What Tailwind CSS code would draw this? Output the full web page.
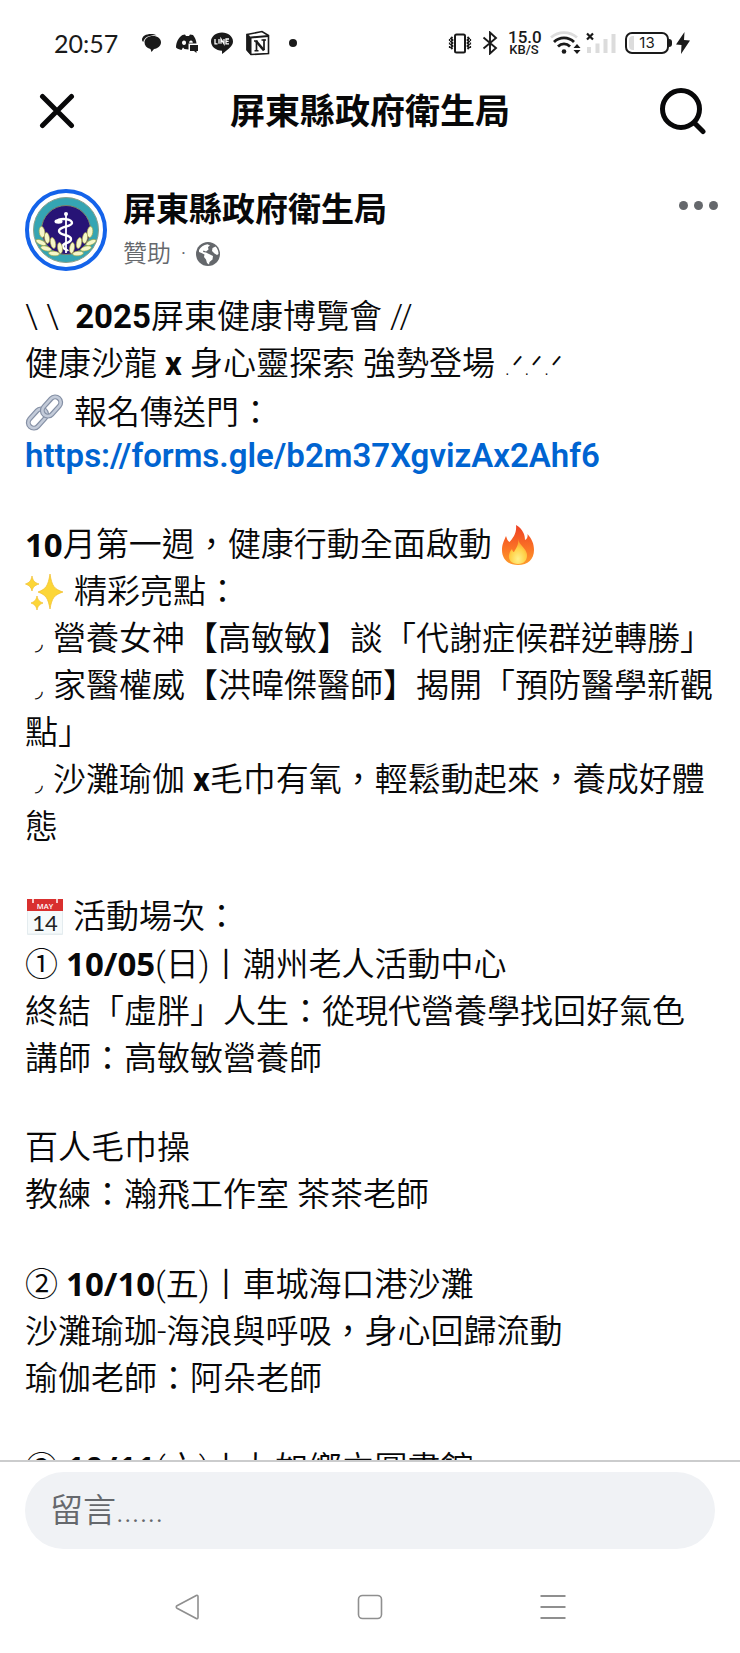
<!DOCTYPE html>
<html lang="zh-Hant">
<head>
  <meta charset="UTF-8" />
  <meta name="viewport" content="width=device-width, initial-scale=1.0"/>
  <title>屏東縣政府衛生局</title>
  <script src="https://cdn.jsdelivr.net/npm/@tailwindcss/browser@4"></script>
</head>
<body class="h-screen flex flex-col overflow-hidden bg-white text-[#080809] font-['Roboto','Noto_Sans_CJK_TC',sans-serif]">

  <!-- Status bar -->
  <div class="shrink-0 h-[86px] pl-[54px] pr-[50px] flex items-center justify-between text-[#1a1a1a]">
    <div class="flex items-center">
      <span class="w-[87px] text-[25px] leading-8 font-['Lato',sans-serif]">20:57</span>
      <div class="flex items-center gap-3">
        <svg class="w-[22px] h-6" viewBox="0 0 22 24" fill="currentColor">
          <path d="M1 9C1 5 5 3 10 3c2 0 4 .4 5.500 1.200C8 4 3.500 6 2.200 11 1.400 10.400 1 9.800 1 9z"/>
          <path d="M12 5c4.500 0 8 2.600 8 6.300 0 3.600-3 6.200-7 6.700L10.500 21 9.500 18C5.500 17 3.500 14.500 3.500 11.300 3.500 7.600 7.300 5 12 5z"/>
        </svg>
        <svg class="w-6 h-6" viewBox="0 0 24 24" fill="currentColor">
          <path fill-rule="evenodd" d="M7.500 4 10 3.500l1 1.500h3l1-1.500L18 4c2 2.600 3.300 5.500 3.500 8.500h-8v6l-4-.5-1.500-1.500L6.500 19C4 18.600 2.500 17.800 1 16.500 1 11.500 3.500 6.500 7.500 4zM9 9.500c-1.200 0-2 1-2 2.200s.8 2.300 2 2.300 2-1 2-2.300S10.200 9.500 9 9.500zM16 9.500c-1.200 0-1.900 1-1.900 2.200h3.700c0-1.200-.7-2.200-1.800-2.200z"/>
          <path d="M15 14h8v6h-1.500v2L19 20h-4z"/>
        </svg>
        <svg class="w-[22px] h-6" viewBox="0 0 22 24">
          <path d="M11 1.500c6 0 11 3.900 11 8.900 0 4.600-5 8-11 12.600v-3.300C5 19.500 0 15.500 0 10.400 0 5.400 5 1.500 11 1.500z" fill="currentColor"/>
          <path d="M4 8v4.800h2.500M8 8v4.800M10 12.800V8l3 4.800V8M18 8h-3v4.800h3M15 10.400h2.600" fill="none" stroke="#fff" stroke-width="1.300"/>
        </svg>
        <svg class="w-[26px] h-[26px]" viewBox="0 0 26 26" fill="none" stroke="currentColor">
          <path d="M2 4.500 17 1.500 23.500 5.500V23.500L6 24.500 2 20z" fill="#fff" stroke-width="1.600"/>
          <path d="M2 4 6 7.500V24.500L2 20z" fill="currentColor"/>
          <path d="M6 7.500 23.500 6" stroke-width="2"/>
          <path d="M11.500 11v9.500M19 9.500V20" stroke-width="1.700"/>
          <path d="M11 11 19 20.500" stroke-width="2.600"/>
          <path d="M9 11h3.500M9.500 20.800h4M16.500 10H21" stroke-width="1.400"/>
        </svg>
        <span class="ml-1.5 w-2 h-2 rounded-full bg-[#1a1a1a]"></span>
      </div>
    </div>

    <div class="flex items-center">
      <svg class="w-6 h-6" viewBox="0 0 24 24" fill="none" stroke="currentColor">
        <rect x="7" y="3.500" width="10" height="18" rx="1.500" stroke-width="2"/>
        <path d="M4.500 6 3 7.500 4.500 9 3 10.500 4.500 12 3 13.500 4.500 15 3 16.500 4.500 18M19.500 6 21 7.500 19.500 9 21 10.500 19.500 12 21 13.500 19.500 15 21 16.500 19.500 18" stroke-width="1.800"/>
        <path d="M1.500 8v9M22.500 8v9" stroke-width="1.200" stroke-dasharray="2 1.500"/>
      </svg>
      <svg class="ml-2.5 w-4 h-6" viewBox="0 0 16 24" fill="none" stroke="currentColor" stroke-width="1.900">
        <path d="M1.500 6.500 14 17 8 22.500V1.500L14 7 1.500 17.500"/>
      </svg>
      <div class="ml-2.5 w-8 text-center font-['Roboto',sans-serif] font-medium">
        <div class="text-[17px] leading-[14px]">15.0</div>
        <div class="text-[13px] leading-[12px]">KB/S</div>
      </div>
      <svg class="ml-2.5 w-[31px] h-6" viewBox="0 0 31 24" fill="none" stroke="currentColor" stroke-width="2.800">
        <path d="M1 6.500C8.500 0 19.500 0 27 6.500" stroke="#dcdcdc"/>
        <path d="M4 11C9.500 5.500 18.500 5.500 24 11M8 15.500c3.500-3.500 8.500-3.500 12 0"/>
        <circle cx="14" cy="20.500" r="2.300" fill="currentColor" stroke="none"/>
        <path d="M23.500 17 27 13l3.500 4zM23.500 19 27 23l3.500-4z" fill="currentColor" stroke="none"/>
      </svg>
      <svg class="ml-1 w-8 h-6" viewBox="0 0 32 24" fill="none">
        <path d="M2 2.500 8 8.500M8 2.500 2 8.500" stroke="currentColor" stroke-width="2.200"/>
        <path d="M4 16v6M12.500 12.500V22M20.500 8v14M28.500 3v19" stroke="#dcdcdc" stroke-width="4"/>
      </svg>
      <div class="ml-2 relative w-11 h-[22px] rounded-[7px] border-2 border-[#1a1a1a] flex items-center justify-center text-[15px] leading-4 font-['Inter',sans-serif]">
        <span class="absolute left-0.5 top-0.5 w-[5px] h-3.5 rounded-l bg-[#dcdcdc]"></span>
        13
      </div>
      <span class="w-[3px] h-2 rounded-r bg-[#1a1a1a]"></span>
      <svg class="ml-1 w-[14px] h-6" viewBox="0 0 14 24" fill="currentColor">
        <path d="M8.500 1 0 13.500l5.500.5L5 23 14 9.500 8 9z"/>
      </svg>
    </div>
  </div>

  <!-- Header -->
  <header class="shrink-0 h-[50px] px-[33px] flex items-center justify-between">
    <button type="button" aria-label="關閉" class="w-12 h-12 flex items-center justify-center">
      <svg class="w-9 h-9" viewBox="0 0 36 36" fill="none" stroke="currentColor" stroke-width="5" stroke-linecap="round">
        <path d="M3.500 3.500 32.500 32.500M32.500 3.500 3.500 32.500"/>
      </svg>
    </button>
    <h1 class="pt-1 text-[35px] leading-[50px] font-bold">屏東縣政府衛生局</h1>
    <button type="button" aria-label="搜尋" class="w-12 h-12 flex items-center justify-center">
      <svg class="w-12 h-12" viewBox="0 0 48 48" fill="none" stroke="currentColor" stroke-width="5" stroke-linecap="round">
        <circle cx="22" cy="22" r="18.500"/>
        <path d="M35.500 36 44 44.500"/>
      </svg>
    </button>
  </header>

  <!-- Post -->
  <main class="flex-1 min-h-0 overflow-hidden px-[25px] pt-[53px]">
    <div class="flex items-start">
      <svg class="w-[82px] h-[82px] shrink-0" viewBox="0 0 82 82">
        <circle cx="41" cy="41" r="39" fill="#fff" stroke="#1463ea" stroke-width="4"/>
        <circle cx="41" cy="41" r="32.500" fill="#35a5b3" stroke="#8a9f8c" stroke-width="1"/>
        <circle cx="41" cy="41" r="24.500" fill="#271376" stroke="#7d8468" stroke-width="1"/>
        <path d="M41 26v38" stroke="#fff" stroke-width="1.800"/>
        <circle cx="41" cy="25" r="2" fill="#fff"/>
        <path d="M31 33c4-5 16-3 16 1s-13 3-13 8 12 3 12 8-8 3-8 7 4 3 5 5" fill="none" stroke="#fff" stroke-width="2.400"/>
        <ellipse cx="33.500" cy="32.500" rx="4" ry="2.200" fill="#fff"/>
        <g fill="#f6f7c9" stroke="#a5a33c" stroke-width=".6">
          <ellipse cx="17" cy="43" rx="2.800" ry="5.500" transform="rotate(-8 17 43)"/>
          <ellipse cx="22" cy="49" rx="2.500" ry="5.500" transform="rotate(-8 22 49)"/>
          <ellipse cx="28" cy="54" rx="2.500" ry="5.500" transform="rotate(-12 28 54)"/>
          <ellipse cx="35" cy="59" rx="2.400" ry="5.500" transform="rotate(-8 35 59)"/>
          <ellipse cx="16" cy="53.500" rx="5.500" ry="2.300" transform="rotate(25 16 53.500)"/>
          <ellipse cx="21" cy="59.500" rx="5.500" ry="2.300" transform="rotate(15 21 59.500)"/>
          <ellipse cx="29" cy="64.500" rx="5.500" ry="2.300" transform="rotate(5 29 64.500)"/>
          <ellipse cx="65" cy="43" rx="2.800" ry="5.500" transform="rotate(8 65 43)"/>
          <ellipse cx="60" cy="49" rx="2.500" ry="5.500" transform="rotate(8 60 49)"/>
          <ellipse cx="54" cy="54" rx="2.500" ry="5.500" transform="rotate(12 54 54)"/>
          <ellipse cx="47" cy="59" rx="2.400" ry="5.500" transform="rotate(8 47 59)"/>
          <ellipse cx="66" cy="53.500" rx="5.500" ry="2.300" transform="rotate(-25 66 53.500)"/>
          <ellipse cx="61" cy="59.500" rx="5.500" ry="2.300" transform="rotate(-15 61 59.500)"/>
          <ellipse cx="53" cy="64.500" rx="5.500" ry="2.300" transform="rotate(-5 53 64.500)"/>
        </g>
      </svg>
      <div class="ml-4 flex-1">
        <h2 class="text-[33px] leading-[42px] font-bold">屏東縣政府衛生局</h2>
        <div class="mt-1 flex items-center text-2xl leading-[38px] text-[#65686c] font-[350]">
          <span>贊助</span>
          <span class="w-[25px] text-center">·</span>
          <svg class="w-6 h-6" viewBox="0 0 24 24">
            <circle cx="12" cy="12" r="12" fill="#65686c"/>
            <path d="M3 8C4.500 5 7.500 2.800 11.500 2.200L14 3.500 12 5l.5 2.500L10 9.500 7.500 8.500 7 10l3 .5 3 1.500 4 2-.5 3.500-3 2.500-.5 2.500-2-1.500-1-3.500-2-2.500.5-2.500-3-1.500L3 10zM16.500 6l3-1.500c2 2 3 4.500 3 7.500l-1.500 1-2.500-1.500L16 9z" fill="#fff"/>
          </svg>
        </div>
      </div>
      <button type="button" aria-label="更多" class="-mr-[3px] h-8 flex items-center gap-1.5">
        <span class="w-[9px] h-[9px] rounded-full bg-[#65686c]"></span>
        <span class="w-[9px] h-[9px] rounded-full bg-[#65686c]"></span>
        <span class="w-[9px] h-[9px] rounded-full bg-[#65686c]"></span>
      </button>
    </div>

    <div class="mt-5 text-[33px] leading-[47px] font-[350] whitespace-nowrap">
      <p><span class="whitespace-pre">\ \  </span><b class="font-bold">2025</b>屏東健康博覽會 //</p>
      <p>健康沙龍 <b class="font-bold">x</b> 身心靈探索 強勢登場 <span class="text-[27px] font-['DejaVu_Sans',sans-serif]">.ᐟ.ᐟ.ᐟ</span></p>
      <p class="flex items-center">
        <svg class="mr-2.5 w-[39px] h-[39px]" viewBox="0 0 39 39" fill="none" stroke-linecap="round">
          <rect x="-5.500" y="-11" width="11" height="22" rx="5.500" transform="translate(12.500 25.500) rotate(42)" stroke="#8590a5" stroke-width="5"/>
          <rect x="-5.500" y="-11" width="11" height="22" rx="5.500" transform="translate(12.500 25.500) rotate(42)" stroke="#c3cbd9" stroke-width="2.600"/>
          <rect x="-5.500" y="-11" width="11" height="22" rx="5.500" transform="translate(26.500 13.500) rotate(42)" stroke="#8590a5" stroke-width="5"/>
          <rect x="-5.500" y="-11" width="11" height="22" rx="5.500" transform="translate(26.500 13.500) rotate(42)" stroke="#c3cbd9" stroke-width="2.600"/>
        </svg>
        報名傳送門：
      </p>
      <p class="leading-10"><a href="https://forms.gle/b2m37XgvizAx2Ahf6" class="font-semibold text-[#0064d1]">https://forms.gle/b2m37XgvizAx2Ahf6</a></p>

      <p class="mt-[45px] flex items-center">
        <b class="font-bold font-['Open_Sans',sans-serif]">10</b>月第一週，健康行動全面啟動
        <svg class="ml-2 w-9 h-10" viewBox="0 0 36 40">
          <defs>
            <linearGradient id="flame" x1="0" y1="0" x2="0" y2="1">
              <stop offset="0" stop-color="#ee3f24"/>
              <stop offset=".6" stop-color="#fb7526"/>
              <stop offset="1" stop-color="#fd9c2b"/>
            </linearGradient>
            <radialGradient id="core" cx=".5" cy=".8" r=".7">
              <stop offset="0" stop-color="#fff18a"/>
              <stop offset=".6" stop-color="#ffd147"/>
              <stop offset="1" stop-color="#fe9a2e"/>
            </radialGradient>
          </defs>
          <path d="M16 0c7 4 9 10 9 15 2-1 3-3 2.500-6C32 14 34 19 34 25c0 9-6 15-16 15S2 34 2 25C2 19 4 16 6 11c1 3 1.500 5 3.500 6C13 13 17 8 16 0z" fill="url(#flame)"/>
          <path d="M18 14c1 6 8 9 9 15 .7 6-3 10-9 10s-10-4-9-9c.5-3 2-5 3-6 .5 2 1 3 2 3 2-4 5-7 4-13z" fill="url(#core)"/>
        </svg>
      </p>
      <p class="flex items-center">
        <svg class="mr-2.5 w-[39px] h-9" viewBox="0 0 39 36" fill="#fcd637" stroke="#f0bd2b" stroke-width=".7">
          <path d="M25 0c2 12 4 15 13 18-9 3-11 6-13 17-2-11-4-14-12-17 8-3 10-6 12-18z"/>
          <path d="M7 2c1 5 2.500 6.500 7 8-4.500 1.500-6 3-7 7-1-4-2.500-5.500-6.500-7C4.500 8.500 6 7 7 2z"/>
          <path d="M12 22c1 4.500 2.500 5.500 6 7-3.500 1.500-5 2.500-6 7-1-4.500-2.500-5.500-6-7 3.500-1.500 5-2.500 6-7z"/>
        </svg>
        精彩亮點：
      </p>
      <p><span class="inline-block w-7 text-center text-xl font-['DejaVu_Sans',sans-serif]">◞</span>營養女神【高敏敏】談「代謝症候群逆轉勝」</p>
      <p><span class="inline-block w-7 text-center text-xl font-['DejaVu_Sans',sans-serif]">◞</span>家醫權威【洪暐傑醫師】揭開「預防醫學新觀<br>點」</p>
      <p><span class="inline-block w-7 text-center text-xl font-['DejaVu_Sans',sans-serif]">◞</span>沙灘瑜伽 <b class="font-bold">x</b>毛巾有氧，輕鬆動起來，養成好體<br>態</p>

      <p class="mt-[43px] flex items-center">
        <svg class="mr-2.5 ml-0.5 w-9 h-9" viewBox="0 0 36 36">
          <rect width="36" height="36" rx="1" fill="#e4ecef"/>
          <rect x="1" y="12" width="34" height="22.500" fill="#f6fafb"/>
          <path d="M0 0h36v12H0z" fill="#d9302f"/>
          <path d="M6 0v4M30 0v4" stroke="#fff" stroke-width="1.500"/>
          <text x="18" y="9.500" text-anchor="middle" font-family="Open Sans" font-weight="600" font-size="7.500" fill="#fff">MAY</text>
          <text x="18" y="32" text-anchor="middle" font-family="Lato" font-weight="400" font-size="22" fill="#222">14</text>
        </svg>
        活動場次：
      </p>
      <p>① <b class="font-bold font-['Open_Sans',sans-serif]">10/05</b>(日)丨潮州老人活動中心</p>
      <p>終結「虛胖」人生：從現代營養學找回好氣色</p>
      <p>講師：高敏敏營養師</p>

      <p class="mt-[42px]">百人毛巾操</p>
      <p>教練：瀚飛工作室 茶茶老師</p>

      <p class="mt-[42px]">② <b class="font-bold font-['Open_Sans',sans-serif]">10/10</b>(五)丨車城海口港沙灘</p>
      <p>沙灘瑜珈-海浪與呼吸，身心回歸流動</p>
      <p>瑜伽老師：阿朵老師</p>

      <p class="mt-[42px]">③ <b class="font-bold font-['Open_Sans',sans-serif]">10/11</b>(六)丨九如鄉立圖書館</p>
    </div>
  </main>

  <!-- Comment box -->
  <form class="shrink-0 border-t-2 border-[#cbcccd] px-[25px] pt-2.5">
    <label for="comment" class="sr-only">留言</label>
    <input type="text" id="comment" placeholder="留言......" class="block w-full h-[77px] px-[25px] rounded-full bg-[#f0f2f5] text-[33px] font-[350] placeholder:text-[#65686c] outline-none" />
  </form>

  <!-- Navigation bar -->
  <nav class="shrink-0 h-[104px] pt-3 flex items-center justify-center gap-[155px] text-[#8f8f8f]">
    <button type="button" aria-label="返回">
      <svg class="w-7 h-7" viewBox="0 0 28 28" fill="none" stroke="currentColor" stroke-width="1.600" stroke-linejoin="round">
        <path d="M25 3.500v21c0 1-.8 1.500-1.700 1L4 15.200c-1-.6-1-1.800 0-2.400L23.300 2.500c.9-.5 1.700 0 1.700 1z"/>
      </svg>
    </button>
    <button type="button" aria-label="主畫面">
      <svg class="w-7 h-7" viewBox="0 0 28 28" fill="none" stroke="currentColor" stroke-width="1.600">
        <rect x="2.500" y="2.500" width="23" height="23" rx="4"/>
      </svg>
    </button>
    <button type="button" aria-label="最近使用">
      <svg class="w-7 h-7" viewBox="0 0 28 28" fill="none" stroke="currentColor" stroke-width="1.800">
        <path d="M1.500 3h25M1.500 14h25M1.500 25h25"/>
      </svg>
    </button>
  </nav>

</body>
</html>
